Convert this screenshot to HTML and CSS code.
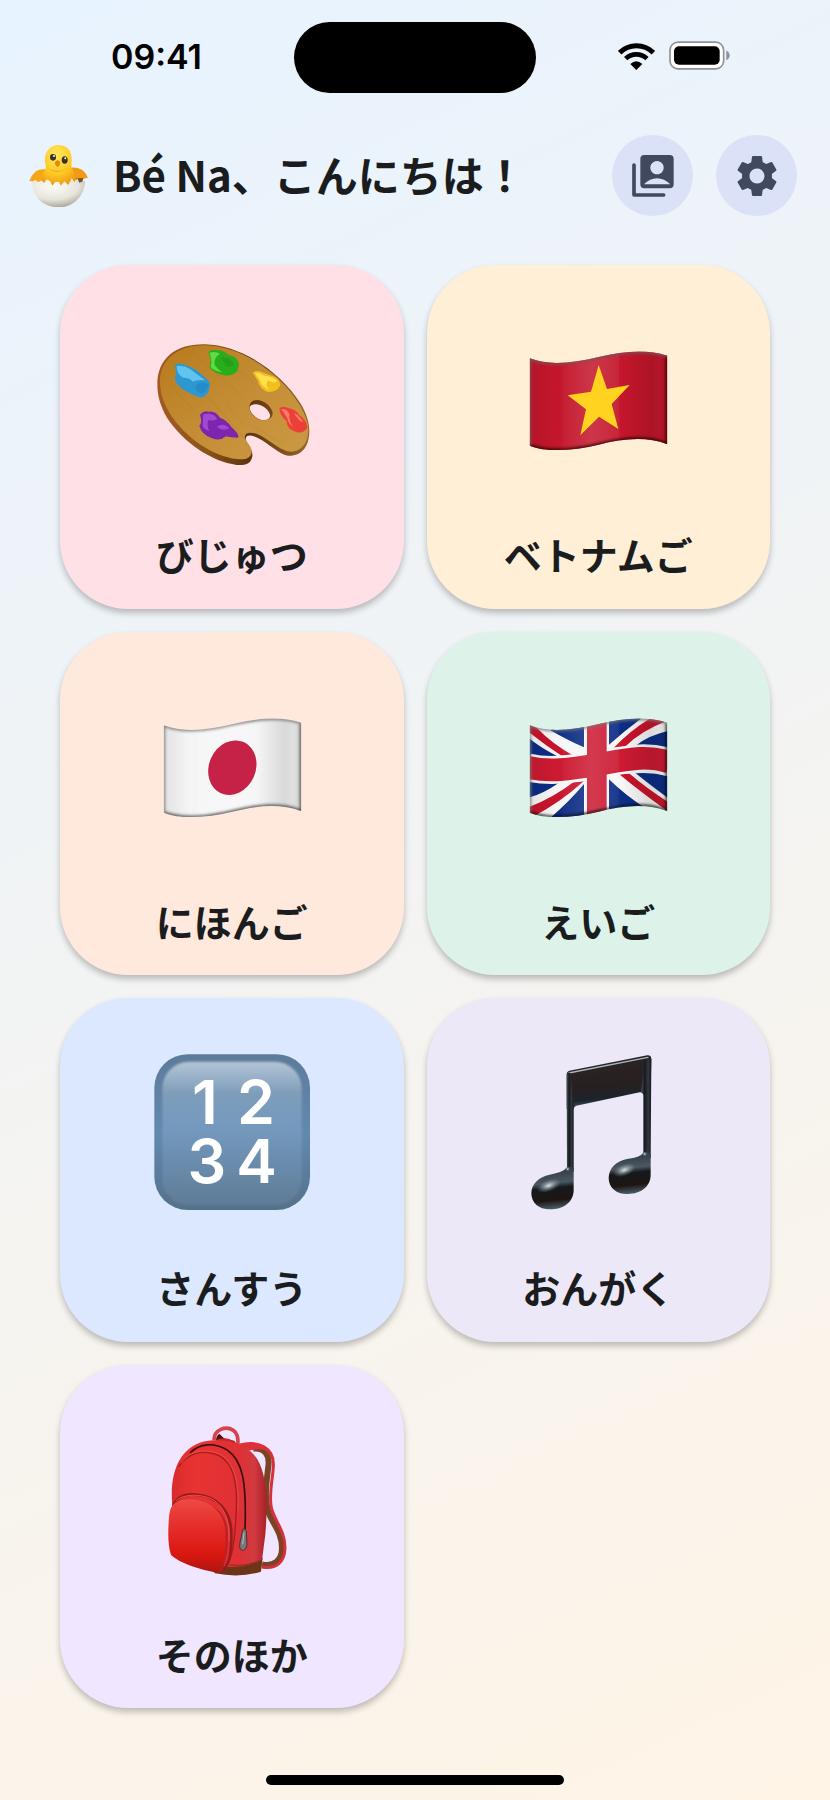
FILE: index.html
```html
<!DOCTYPE html>
<html lang="ja">
  <head>
    <meta charset="utf-8">
    <meta name="viewport" content="width=device-width, initial-scale=1">
    <title>Bé Na</title>
    <link rel="stylesheet" href="styles.css">
  </head>
  <body>
    <div class="status">
      <span class="time">09:41</span>
      <span class="island"></span>
      <div class="indicators">
        <svg class="wifi" viewBox="608 124 111 84" aria-hidden="true">
          <path d="M613 156 A72 72 0 0 1 714 156" fill="none" stroke="#000" stroke-width="15"/>
          <path d="M631 174 A46 46 0 0 1 695 174" fill="none" stroke="#000" stroke-width="14"/>
          <path d="M645 190 Q663 174 681 190 L663 208Z"/>
        </svg>
        <svg class="battery" viewBox="761 124 183 86" aria-hidden="true">
          <rect x="764" y="127" width="161" height="80" rx="24" fill="#fff" stroke="#8f9296" stroke-width="5"/>
          <rect x="776" y="139" width="137" height="56" rx="15"/>
          <path d="M933 152 Q943 157 943 167 Q943 177 933 181Z" fill="#8f9296"/>
        </svg>
      </div>
    </div>

    <header class="topbar">
      <svg class="chick" viewBox="24 40 186 186" aria-hidden="true">
        <defs>
          <radialGradient id="chickBody" cx="45%" cy="25%" r="75%">
            <stop offset="0" stop-color="#ffe95c"/>
            <stop offset="0.6" stop-color="#fdc824"/>
            <stop offset="1" stop-color="#f09a10"/>
          </radialGradient>
          <radialGradient id="shell" cx="40%" cy="25%" r="80%">
            <stop offset="0" stop-color="#fdfdf8"/>
            <stop offset="0.6" stop-color="#e6e5dc"/>
            <stop offset="1" stop-color="#a39f90"/>
          </radialGradient>
        </defs>
        <path d="M75 113 Q42 108 28 148 L50 150 L78 150Z" fill="#f6a51a"/>
        <path d="M152 108 Q190 103 204 138 Q186 140 182 150 L150 150Z" fill="#f29a14"/>
        <path d="M168 140 L190 139 L186 156 L170 154Z" fill="#7a5524"/>
        <path d="M115 40 C140 40 156 58 155 84 C155 98 152 105 158 114 Q168 130 168 166 H62 Q62 130 74 116 C82 106 74 96 74 86 C76 57 90 41 115 40Z" fill="url(#chickBody)"/>
        <path d="M82 109 Q112 132 150 107 Q133 118 112 118 Q94 117 82 109Z" fill="#ee9d12"/>
        <path d="M36 152 L46 144 L54 154 L64 146 L72 154 L80 143 L90 148 L97 162 L106 151 L116 150 L123 162 L133 149 L145 160 L155 140 L163 151 L172 140 L178 153 L195 147 C194 195 158 227 116 227 C74 227 36 198 36 152Z" fill="url(#shell)"/>
        <ellipse cx="99" cy="77" rx="9" ry="10" fill="#3a3220"/>
        <ellipse cx="134" cy="85" rx="9" ry="11" fill="#3a3220"/>
        <circle cx="102" cy="73" r="3" fill="#fff"/>
        <circle cx="136" cy="80" r="3" fill="#fff"/>
        <path d="M105 92 Q112 80 120 90 Q122 100 113 106 Q104 101 105 92Z" fill="#ee8314"/>
      </svg>
      <h1 class="greeting">Bé Na、こんにちは！</h1>
      <button class="round" type="button" aria-label="プロフィール">
        <svg viewBox="638 452 150 150" aria-hidden="true">
          <path d="M656 494 V584 H745" fill="none" stroke="#40495e" stroke-width="11" stroke-linecap="round" stroke-linejoin="round"/>
          <path fill="#40495e" fill-rule="evenodd" d="M687 464 H763 Q775 464 775 476 V552 Q775 564 763 564 H687 Q675 564 675 552 V476 Q675 464 687 464Z M725 482 a20 20 0 1 0 0.1 0Z M686 552 H765 Q747 534 725 534 Q703 534 686 552Z"/>
        </svg>
      </button>
      <button class="round" type="button" aria-label="せってい">
        <svg viewBox="0 0 24 24" aria-hidden="true">
          <path fill="#40495e" d="M19.14 12.94c.04-.3.06-.61.06-.94 0-.32-.02-.64-.07-.94l2.03-1.58c.18-.14.23-.41.12-.61l-1.92-3.32c-.12-.22-.37-.29-.59-.22l-2.39.96c-.5-.38-1.03-.7-1.62-.94l-.36-2.54c-.04-.24-.24-.41-.48-.41h-3.84c-.24 0-.43.17-.47.41l-.36 2.54c-.59.24-1.13.57-1.62.94l-2.39-.96c-.22-.08-.47 0-.59.22L2.74 8.87c-.12.21-.08.47.12.61l2.03 1.58c-.05.3-.09.63-.09.94s.02.64.07.94l-2.03 1.58c-.18.14-.23.41-.12.61l1.92 3.32c.12.22.37.29.59.22l2.39-.96c.5.38 1.03.7 1.62.94l.36 2.54c.05.24.24.41.48.41h3.84c.24 0 .44-.17.47-.41l.36-2.54c.59-.24 1.13-.56 1.62-.94l2.39.96c.22.08.47 0 .59-.22l1.92-3.32c.12-.22.07-.47-.12-.61l-2.01-1.58zM12 15.6c-1.98 0-3.6-1.62-3.6-3.6s1.62-3.6 3.6-3.6 3.6 1.62 3.6 3.6-1.62 3.6-3.6 3.6z"/>
        </svg>
      </button>
    </header>

    <main class="subjects">
      <button class="card art" type="button">
        <svg viewBox="42 0 468 468" aria-hidden="true">
          <defs>
            <linearGradient id="wood" x1="0" y1="0" x2="1" y2="1">
              <stop offset="0" stop-color="#b87a1c"/>
              <stop offset="0.5" stop-color="#c48d35"/>
              <stop offset="1" stop-color="#cb9a45"/>
            </linearGradient>
            <linearGradient id="woodEdge" x1="0" y1="0" x2="1" y2="0">
              <stop offset="0" stop-color="#a35a22"/>
              <stop offset="0.3" stop-color="#8f5518"/>
              <stop offset="0.6" stop-color="#5d3410"/>
              <stop offset="1" stop-color="#9a6626"/>
            </linearGradient>
          </defs>
          <path fill="url(#woodEdge)" fill-rule="evenodd" d="M52 190 C52 110 110 68 195 70 C300 72 420 150 480 245 C505 285 512 320 506 352 C500 385 480 402 455 404 C420 408 385 362 345 347 C325 340 315 345 318 358 C325 378 342 388 336 410 C331 428 315 434 290 432 C215 422 130 365 82 292 C62 258 52 225 52 190Z M329 258 C327 270 340 288 362 296 C380 301 392 293 390 281 C386 266 368 252 350 250 C340 249 332 251 329 258Z"/>
          <path fill="url(#wood)" fill-rule="evenodd" d="M60 182 C60 115 115 72 195 73 C300 75 415 150 475 245 C500 285 508 315 504 340 C500 372 480 391 455 392 C420 393 385 350 345 337 C322 331 310 340 316 354 C324 370 339 380 334 398 C329 413 312 417 290 414 C220 406 135 350 90 278 C70 244 60 215 60 182Z M329 252 C325 268 338 288 360 296 C380 302 399 293 398 275 C395 258 375 239 353 237 C342 237 332 241 329 252Z"/>
          <g fill="none" stroke="#9b6518" stroke-width="2" opacity="0.25">
            <path d="M95 120 L240 270 M150 90 L320 235 M220 90 L340 180 M90 190 L190 300 M210 230 L310 350 M330 310 L430 370 M260 250 L315 315"/>
          </g>
          <path fill="#2c98d2" d="M105 132 Q112 124 128 130 Q150 134 170 148 L204 178 Q214 188 206 210 Q194 234 176 228 Q130 212 112 190 Q100 172 108 158Z"/>
          <path fill="#61c4ef" d="M110 135 Q130 132 150 144 L195 178 Q172 174 158 182 Q150 170 130 170 Q110 160 110 135Z"/>
          <path fill="#1e7fbb" d="M170 190 Q190 180 205 190 Q200 212 185 218 Q160 208 170 190Z" opacity="0.5"/>
          <path fill="#29ad1c" d="M205 94 Q212 84 228 88 Q250 86 266 102 Q300 108 296 138 Q292 164 258 164 Q225 158 210 140 Q208 125 213 118Z"/>
          <path fill="#5ddc45" d="M208 95 Q226 90 240 98 Q220 110 224 132 Q238 150 248 154 Q220 150 212 138 Q218 116 208 95Z"/>
          <path fill="#1d9116" d="M244 110 Q270 108 282 128 Q270 145 256 132Z" opacity="0.5"/>
          <path fill="#f2bf1d" d="M338 155 Q350 146 366 154 L405 168 Q422 178 420 196 Q410 214 384 213 Q360 206 354 180Z"/>
          <path fill="#ffe04d" d="M345 156 Q360 154 372 164 Q400 166 412 180 Q400 190 386 178 Q372 190 388 206 Q366 200 360 178Z"/>
          <path fill="#ec3f38" d="M418 262 Q428 252 446 262 Q466 264 478 282 Q502 300 502 320 Q494 336 470 334 Q440 325 440 300 Q420 286 418 262Z"/>
          <path fill="#ff7a68" d="M424 264 Q440 262 448 278 Q446 300 460 318 Q444 308 442 292Z M462 276 Q482 286 490 304 Q476 302 462 276Z"/>
          <path fill="#7c25ad" d="M180 282 Q190 268 206 272 Q226 268 240 290 Q262 298 274 318 Q300 340 294 350 Q270 350 258 346 Q240 362 216 352 Q184 340 178 314 Q188 304 180 282Z"/>
          <path fill="#a149d1" d="M190 280 Q220 274 232 294 Q216 302 206 296 Q198 310 208 330 Q186 322 188 308Z M230 318 Q250 302 268 322 Q250 332 230 318Z"/>
        </svg>
        <span class="label">びじゅつ</span>
      </button>

      <button class="card vietnamese" type="button">
        <svg viewBox="61 0 468 468" aria-hidden="true">
          <defs>
            <clipPath id="flag">
              <path d="M90 112 C150 135 220 126 297 108 S440 84 503 104 V370 C440 345 370 353 297 371 S140 395 90 374Z"/>
            </clipPath>
            <linearGradient id="wave" x1="0" y1="0" x2="1" y2="0">
              <stop offset="0" stop-color="#000" stop-opacity="0.08"/>
              <stop offset="0.2" stop-color="#000" stop-opacity="0"/>
              <stop offset="0.25" stop-color="#fff" stop-opacity="0.04"/>
              <stop offset="0.45" stop-color="#fff" stop-opacity="0.14"/>
              <stop offset="0.64" stop-color="#fff" stop-opacity="0.07"/>
              <stop offset="0.66" stop-color="#fff" stop-opacity="0"/>
              <stop offset="0.67" stop-color="#000" stop-opacity="0"/>
              <stop offset="0.88" stop-color="#000" stop-opacity="0.12"/>
              <stop offset="0.94" stop-color="#000" stop-opacity="0.09"/>
              <stop offset="1" stop-color="#000" stop-opacity="0.14"/>
            </linearGradient>
            <filter id="soft" x="-10%" y="-10%" width="120%" height="120%">
              <feGaussianBlur stdDeviation="5"/>
            </filter>
          </defs>
          <g clip-path="url(#flag)">
            <rect x="80" y="80" width="430" height="320" fill="#c4162c"/>
            <rect x="90" y="80" width="413" height="320" fill="url(#wave)"/>
            <path d="M297 132 L322 204 L390 192 L336 249 L356 324 L298 287 L242 343 L259 265 L204 223 L274 212Z" fill="#ffd31f"/>
            <path d="M90 374 C140 395 220 390 297 371 S440 345 503 370 V104" fill="none" stroke="#2b0006" stroke-width="9" filter="url(#soft)"/>
            <path d="M90 374 V112 C150 135 220 126 297 108 S440 84 503 104" fill="none" stroke="#7d5057" stroke-width="9" filter="url(#soft)"/>
          </g>
        </svg>
        <span class="label">ベトナムご</span>
      </button>

      <button class="card japanese" type="button">
        <svg viewBox="61 0 468 468" aria-hidden="true">
          <g clip-path="url(#flag)">
            <rect x="80" y="80" width="430" height="320" fill="#f6f6f7"/>
            <rect x="90" y="80" width="413" height="320" fill="url(#wave)"/>
            <ellipse cx="296" cy="239" rx="70" ry="84" transform="rotate(24 296 239)" fill="#c62248"/>
            <path d="M90 374 C140 395 220 390 297 371 S440 345 503 370 V104" fill="none" stroke="#4c4c4c" stroke-width="9" filter="url(#soft)"/>
            <path d="M90 374 V112 C150 135 220 126 297 108 S440 84 503 104" fill="none" stroke="#777" stroke-width="8" filter="url(#soft)"/>
          </g>
        </svg>
        <span class="label">にほんご</span>
      </button>

      <button class="card english" type="button">
        <svg viewBox="61 0 468 468" aria-hidden="true">
          <g clip-path="url(#flag)">
            <rect x="80" y="80" width="430" height="320" fill="#f7f7f8"/>
            <g fill="#0c2d85">
              <path d="M152 127 L180 110 H253 V178 Q210 160 152 127Z"/>
              <path d="M80 144 Q120 178 174 205 L80 206Z"/>
              <path d="M328 80 H440 Q385 120 328 170Z"/>
              <path d="M408 173 Q450 140 510 128 V186 Q460 170 408 173Z"/>
              <path d="M80 274 Q130 286 178 284 Q130 318 80 331Z"/>
              <path d="M140 400 Q205 345 253 288 V400Z"/>
              <path d="M328 274 Q380 325 440 362 L328 380Z"/>
              <path d="M408 256 Q460 252 510 266 V334 Q450 290 408 256Z"/>
            </g>
            <g fill="#c9142b">
              <path d="M85 108 L112 120 Q160 170 222 203 L190 206 Q135 170 85 130Z"/>
              <path d="M342 179 Q395 125 450 92 L510 96 Q430 125 376 176Z"/>
              <path d="M85 358 Q160 330 222 282 L252 280 Q180 345 100 386 L85 380Z"/>
              <path d="M358 258 L390 257 Q440 300 510 345 V374 Q420 310 358 258Z"/>
            </g>
            <path d="M84 238 C150 253 210 244 297 229 S440 200 510 223" fill="none" stroke="#f7f7f8" stroke-width="84"/>
            <rect x="254" y="80" width="74" height="320" fill="#f7f7f8"/>
            <path d="M84 238 C150 253 210 244 297 229 S440 200 510 223" fill="none" stroke="#cc1a32" stroke-width="68"/>
            <rect x="262" y="80" width="59" height="320" fill="#cc1a32"/>
            <rect x="90" y="80" width="413" height="320" fill="url(#wave)"/>
            <path d="M90 374 C140 395 220 390 297 371 S440 345 503 370 V104" fill="none" stroke="#111" stroke-width="8" filter="url(#soft)"/>
            <path d="M90 374 V112 C150 135 220 126 297 108 S440 84 503 104" fill="none" stroke="#777" stroke-width="8" filter="url(#soft)"/>
          </g>
        </svg>
        <span class="label">えいご</span>
      </button>

      <button class="card maths" type="button">
        <svg viewBox="73 72 468 468" aria-hidden="true">
          <defs>
            <linearGradient id="keyRim" x1="0" y1="0" x2="0" y2="1">
              <stop offset="0" stop-color="#5d7b99"/>
              <stop offset="0.5" stop-color="#6189b0"/>
              <stop offset="1" stop-color="#557189"/>
            </linearGradient>
            <linearGradient id="keyFace" x1="0" y1="0" x2="0" y2="1">
              <stop offset="0" stop-color="#b4c5d6"/>
              <stop offset="0.22" stop-color="#7e9dbb"/>
              <stop offset="0.48" stop-color="#7399bd"/>
              <stop offset="1" stop-color="#5f7c97"/>
            </linearGradient>
            <filter id="keyBlur" x="-10%" y="-10%" width="120%" height="120%">
              <feGaussianBlur stdDeviation="3"/>
            </filter>
          </defs>
          <rect x="74" y="73" width="467" height="467" rx="100" fill="url(#keyRim)"/>
          <rect x="98" y="95" width="418" height="430" rx="80" fill="url(#keyFace)" filter="url(#keyBlur)"/>
          <g class="digits" text-anchor="middle">
            <text x="226" y="283">1</text>
            <text x="379" y="283">2</text>
            <text x="232" y="459">3</text>
            <text x="381" y="459">4</text>
          </g>
        </svg>
        <span class="label">さんすう</span>
      </button>

      <button class="card music" type="button">
        <svg viewBox="61 72 468 468" aria-hidden="true">
          <defs>
            <linearGradient id="beam" x1="0" y1="0" x2="0.15" y2="1">
              <stop offset="0" stop-color="#20242a"/>
              <stop offset="0.3" stop-color="#2b2222"/>
              <stop offset="0.65" stop-color="#261f20"/>
              <stop offset="0.85" stop-color="#1c242c"/>
              <stop offset="1" stop-color="#4e6373"/>
            </linearGradient>
            <linearGradient id="stem" x1="0" y1="0" x2="1" y2="0">
              <stop offset="0" stop-color="#4b545d"/>
              <stop offset="0.35" stop-color="#15181c"/>
              <stop offset="0.7" stop-color="#33383f"/>
              <stop offset="1" stop-color="#14171b"/>
            </linearGradient>
            <linearGradient id="head" x1="0.3" y1="0" x2="0.4" y2="1">
              <stop offset="0" stop-color="#2a343c"/>
              <stop offset="0.4" stop-color="#4b5862"/>
              <stop offset="0.52" stop-color="#16191c"/>
              <stop offset="0.8" stop-color="#1d1512"/>
              <stop offset="1" stop-color="#4a5c66"/>
            </linearGradient>
            <radialGradient id="glint">
              <stop offset="0" stop-color="#dbe6ec"/>
              <stop offset="1" stop-color="#7e8e98" stop-opacity="0"/>
            </radialGradient>
          </defs>
          <path fill="url(#beam)" d="M201 132 Q201 124 209 122 L443 76 Q454 75 455 86 L453 190 L430 190 Q426 186 420 187 L230 227 Q222 230 222 238 L201 238Z"/>
          <path d="M207 129 L445 82" fill="none" stroke="#a9b7bf" stroke-width="4" stroke-linecap="round"/>
          <path fill="url(#stem)" d="M201 132 Q203 126 212 128 L222 225 V425 H202Z"/>
          <path fill="url(#stem)" d="M435 90 L455 86 L453 385 H431 V196 Q430 190 424 187Z"/>
          <path fill="url(#head)" d="M202 412 Q211 406 222 414 V482 C220 518 190 538 151 538 C117 538 95 519 95 489 C96 460 118 441 150 434 Q190 428 202 412Z"/>
          <path fill="url(#head)" d="M431 368 Q442 360 453 370 V436 C452 470 424 492 385 492 C350 493 327 473 327 443 C328 414 350 393 382 387 Q422 382 431 368Z"/>
          <ellipse cx="147" cy="467" rx="38" ry="18" fill="url(#glint)" transform="rotate(-20 147 467)"/>
          <ellipse cx="374" cy="420" rx="36" ry="18" fill="url(#glint)" transform="rotate(-20 374 420)"/>
          <circle cx="204" cy="417" r="7" fill="url(#glint)"/>
          <circle cx="435" cy="372" r="7" fill="url(#glint)"/>
        </svg>
        <span class="label">おんがく</span>
      </button>

      <button class="card other" type="button">
        <svg viewBox="42 60 468 468" aria-hidden="true">
          <defs>
            <linearGradient id="bag" x1="0" y1="0" x2="1" y2="0">
              <stop offset="0" stop-color="#d82b2b"/>
              <stop offset="0.25" stop-color="#e83431"/>
              <stop offset="0.7" stop-color="#df3035"/>
              <stop offset="0.87" stop-color="#d13a40"/>
              <stop offset="1" stop-color="#a82027"/>
            </linearGradient>
            <linearGradient id="pocket" x1="0" y1="0" x2="0" y2="1">
              <stop offset="0" stop-color="#ee4a43"/>
              <stop offset="0.35" stop-color="#e52f2c"/>
              <stop offset="0.75" stop-color="#da1711"/>
              <stop offset="1" stop-color="#a91710"/>
            </linearGradient>
          </defs>
          <path d="M340 143 C372 140 390 160 385 196 C380 240 372 290 384 330 C396 368 426 392 426 440 C426 478 402 498 366 490" fill="none" stroke="#7a4424" stroke-width="18"/>
          <path d="M300 132 C352 118 404 140 400 196 C398 236 386 282 394 320 C402 358 436 388 435 442 C434 484 408 506 366 498" fill="none" stroke="#d5313b" stroke-width="9"/>
          <path d="M296 132 C340 116 384 128 396 160 Q376 136 322 150Z" fill="#dd303b"/>
          <path d="M222 118 C222 84 258 74 280 88 Q296 98 294 132" fill="none" stroke="#d9414b" stroke-width="11"/>
          <path d="M228 120 Q228 104 238 98 L252 112 L284 120 L286 132Z" fill="#4b1517"/>
          <path d="M220 122 Q262 96 300 136 Q264 128 220 128Z" fill="#c8272b"/>
          <path d="M210 480 L368 470 L363 512 Q300 532 224 517Z" fill="#6d3518"/>
          <path d="M96 300 C90 205 125 130 205 119 C265 112 325 130 352 175 C385 230 382 330 376 400 L366 478 Q325 498 262 498 L100 440Z" fill="url(#bag)"/>
          <path d="M116 198 C145 152 190 148 228 160 C285 180 294 262 288 340 C284 430 275 490 245 512" fill="none" stroke="#a81c20" stroke-width="4"/>
          <path d="M124 186 C148 148 195 144 234 157 C286 178 298 250 294 330" fill="none" stroke="#ee5650" stroke-width="2"/>
          <path d="M150 156 C180 124 225 126 260 146 C308 178 320 240 315 385" fill="none" stroke="#3c0b0d" stroke-width="5"/>
          <path d="M100 315 C112 280 150 275 195 285 C250 300 275 350 274 400 C274 460 268 495 242 514" fill="none" stroke="#9c1a1d" stroke-width="8"/>
          <path d="M180 300 C250 320 266 360 264 420 C262 470 254 500 236 516 L200 500Z" fill="#bd2022"/>
          <path d="M107 300 C130 278 180 278 215 294 C255 315 270 365 267 420" fill="none" stroke="#e2534e" stroke-width="3"/>
          <path d="M88 340 C92 300 125 292 165 296 C225 304 256 345 257 400 C257 460 252 500 234 516 C180 506 120 488 93 462 C82 430 84 380 88 340Z" fill="url(#pocket)"/>
          <path d="M268 492 Q320 498 366 476" fill="none" stroke="#96262a" stroke-width="3"/>
          <path d="M308 386 Q315 380 319 390 L321 432 Q316 450 306 448 Q296 444 300 425Z" fill="#77797c" stroke="#4c3033" stroke-width="3"/>
          <path d="M312 395 L308 430" stroke="#b7babd" stroke-width="3"/>
        </svg>
        <span class="label">そのほか</span>
      </button>
    </main>

    <footer class="home"><span class="home-bar"></span></footer>
  </body>
</html>
```

FILE: styles.css
```css
*{box-sizing: border-box;}
body{
  margin: 0;
  min-height: 100vh;
  display: flex;
  flex-direction: column;
  font-family: "Noto Sans CJK JP", sans-serif;
  color: #1a1c1e;
  background: linear-gradient(155deg, #e7f3ff 0%, #fff4e6 100%);
}
button{
  font-family: inherit;
  color: inherit;
  border: none;
  padding: 0;
  cursor: pointer;
}
svg{
  display: block;
  flex: none;
}

/* status bar */
.status{
  display: grid;
  grid-template-columns: 1fr 242px 1fr;
  align-items: center;
  padding-top: 22px;
}
.time{
  justify-self: end;
  margin-right: 92px;
  padding-bottom: 2px;
  font-family: Inter, sans-serif;
  font-size: 34px;
  font-weight: 600;
  line-height: 40px;
  color: #000;
}
.island{
  height: 71px;
  border-radius: 36px;
  background-color: #000;
}
.indicators{
  display: flex;
  align-items: center;
  gap: 14px;
  margin-left: 82px;
  padding-bottom: 4px;
}
.wifi{
  width: 37px;
  height: 28px;
}
.battery{
  width: 61px;
  height: 29px;
}

/* greeting row */
.topbar{
  display: flex;
  align-items: center;
  gap: 23px;
  padding: 42px 33px 49px 28px;
}
.chick{
  width: 62px;
  height: 62px;
}
.greeting{
  flex: 1;
  margin: 0;
  padding-bottom: 4px;
  font-size: 42px;
  font-weight: 700;
  line-height: 60px;
  white-space: nowrap;
}
.round{
  display: flex;
  align-items: center;
  justify-content: center;
  width: 81px;
  height: 81px;
  border-radius: 50%;
  background-color: #dbe1f7;
}
.round svg{
  width: 50px;
  height: 50px;
}

/* subject cards */
.subjects{
  flex: 1;
  display: grid;
  grid-template-columns: 1fr 1fr;
  align-content: start;
  gap: 23px;
  padding: 0 60px;
}
.card{
  display: flex;
  flex-direction: column;
  align-items: center;
  justify-content: flex-start;
  gap: 51px;
  aspect-ratio: 1;
  padding-top: 56px;
  border-radius: 68px;
  box-shadow: 0 4px 6px rgba(0, 0, 0, 0.24);
}
.card svg{
  width: 156px;
  height: 156px;
}
.label{
  font-size: 38px;
  font-weight: 700;
  line-height: 52px;
}
.digits{
  font-family: Inter, sans-serif;
  font-size: 183px;
  font-weight: 600;
  fill: #fff;
}
.art{background-color: #ffe0e6;}
.vietnamese{background-color: #ffefd6;}
.japanese{background-color: #ffe9dd;}
.english{background-color: #ddf3ea;}
.maths{background-color: #dce8ff;}
.music{background-color: #ece8f7;}
.other{background-color: #f0e6ff;}

/* home indicator */
.home{
  display: flex;
  justify-content: center;
  padding: 24px 0 15px;
}
.home-bar{
  width: 36%;
  height: 10px;
  border-radius: 5px;
  background-color: #000;
}
```
